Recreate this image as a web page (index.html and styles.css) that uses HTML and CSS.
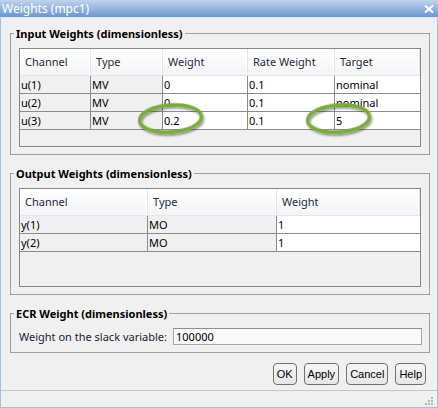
FILE: index.html
```html
<!DOCTYPE html>
<html>
<head>
<meta charset="utf-8">
<link rel="stylesheet" href="styles.css">
</head>
<body>
<div class="window">
  <div class="titlebar">
    <span class="title">Weights (mpc1)</span>
    <svg class="close" width="10" height="8" viewBox="0 0 10 8"><path d="M1 0.5 L9 7.5 M9 0.5 L1 7.5" stroke="#fff" stroke-width="2"/></svg>
  </div>
  <div class="client">
    <fieldset class="group">
      <legend>Input Weights (dimensionless)</legend>
      <div class="table t-input">
        <div class="row head">
          <div class="cell">Channel</div>
          <div class="cell">Type</div>
          <div class="cell">Weight</div>
          <div class="cell">Rate Weight</div>
          <div class="cell">Target</div>
        </div>
        <div class="row">
          <div class="cell ro">u(1)</div>
          <div class="cell ro">MV</div>
          <div class="cell">0</div>
          <div class="cell">0.1</div>
          <div class="cell">nominal</div>
        </div>
        <div class="row">
          <div class="cell ro">u(2)</div>
          <div class="cell ro">MV</div>
          <div class="cell">0</div>
          <div class="cell">0.1</div>
          <div class="cell">nominal</div>
        </div>
        <div class="row">
          <div class="cell ro">u(3)</div>
          <div class="cell ro">MV</div>
          <div class="cell">0.2</div>
          <div class="cell">0.1</div>
          <div class="cell">5</div>
        </div>
        <div class="filler"></div>
      </div>
    </fieldset>

    <fieldset class="group">
      <legend>Output Weights (dimensionless)</legend>
      <div class="table t-output">
        <div class="row head">
          <div class="cell">Channel</div>
          <div class="cell">Type</div>
          <div class="cell">Weight</div>
        </div>
        <div class="row">
          <div class="cell ro">y(1)</div>
          <div class="cell ro">MO</div>
          <div class="cell">1</div>
        </div>
        <div class="row">
          <div class="cell ro">y(2)</div>
          <div class="cell ro">MO</div>
          <div class="cell">1</div>
        </div>
        <div class="filler"></div>
      </div>
    </fieldset>

    <fieldset class="group ecr">
      <legend>ECR Weight (dimensionless)</legend>
      <div class="field">
        <span class="label">Weight on the slack variable:</span>
        <div class="input">100000</div>
      </div>
    </fieldset>

    <div class="buttons">
      <button class="btn">OK</button>
      <button class="btn">Apply</button>
      <button class="btn">Cancel</button>
      <button class="btn">Help</button>
    </div>

    <div class="statusbar">
      <svg class="grip" width="10" height="9" viewBox="0 0 10 9">
        <rect x="7" y="0" width="2" height="2" fill="#b8b8b8"/>
        <rect x="4" y="3" width="2" height="2" fill="#b8b8b8"/>
        <rect x="7" y="3" width="2" height="2" fill="#b8b8b8"/>
        <rect x="1" y="6" width="2" height="2" fill="#b8b8b8"/>
        <rect x="4" y="6" width="2" height="2" fill="#b8b8b8"/>
        <rect x="7" y="6" width="2" height="2" fill="#b8b8b8"/>
      </svg>
    </div>
  </div>

  <svg class="annot" width="438" height="408" viewBox="0 0 438 408">
    <defs>
      <filter id="sh" x="-20%" y="-30%" width="140%" height="170%">
        <feGaussianBlur in="SourceAlpha" stdDeviation="1.2"/>
        <feOffset dx="1" dy="2" result="b"/>
        <feComponentTransfer><feFuncA type="linear" slope="0.45"/></feComponentTransfer>
        <feMerge><feMergeNode/><feMergeNode in="SourceGraphic"/></feMerge>
      </filter>
    </defs>
    <ellipse cx="170.5" cy="118.5" rx="31" ry="13.5" fill="none" stroke="#7aaa3a" stroke-width="3.5" filter="url(#sh)" transform="rotate(-4 170.5 118.5)"/>
    <ellipse cx="338.5" cy="118.5" rx="31" ry="13.5" fill="none" stroke="#7aaa3a" stroke-width="3.5" filter="url(#sh)" transform="rotate(-4 338.5 118.5)"/>
  </svg>
</div>
</body>
</html>
```

FILE: styles.css
```css
html, body {
  margin: 0;
  padding: 0;
  background: #f0f0f0;
}

body {
  font-family: "Noto Sans", "Open Sans", sans-serif;
  font-size: 11px;
  color: #000;
}

.window {
  position: relative;
  width: 438px;
  height: 408px;
  display: flex;
  flex-direction: column;
  background: #f0f0f0;
  overflow: hidden;
}

.titlebar {
  height: 17px;
  border-bottom: 1px solid #e2e9f2;
  background: linear-gradient(#bfd3ec, #6a97cf);
  display: flex;
  align-items: center;
  justify-content: space-between;
  padding: 0 4px 0 2px;
}

.title {
  color: #fff;
  font-size: 12px;
  line-height: 17px;
}

.close {
  display: block;
}

.client {
  flex: 1;
  display: flex;
  flex-direction: column;
  border-left: 1px solid #a3bfe1;
  border-right: 1px solid #a3bfe1;
  border-bottom: 1px solid #a3bfe1;
  padding-top: 8px;
}

.group {
  margin: 0 7px 11px 9px;
  padding: 7px 8px;
  border: 1px solid #a0a0a0;
  min-width: 0;
}

.group.ecr {
  margin-bottom: 10px;
  padding-right: 7px;
}

legend {
  font-weight: bold;
  font-size: 11px;
  line-height: 15px;
  padding: 0 2px;
  margin-left: -5px;
  color: #000;
}

.table {
  height: 99px;
  box-sizing: border-box;
  border: 1px solid #828790;
  background: #f0f0f0;
  display: flex;
  flex-direction: column;
}

.row {
  display: grid;
  height: 18px;
  box-sizing: border-box;
  border-bottom: 1px solid #8c8c8c;
}

.t-input .row {
  grid-template-columns: 71px 72px 85px 87px 1fr;
}

.t-output .row {
  grid-template-columns: 128px 129px 1fr;
}

.cell {
  background: #fff;
  border-right: 1px solid #8c8c8c;
  padding-left: 1px;
  line-height: 17px;
  white-space: nowrap;
  overflow: hidden;
}

.cell:last-child {
  border-right: none;
}

.cell.ro {
  background: #f0f0f0;
}

.row.head {
  height: 27px;
  border-bottom: 1px solid #e3e5e8;
}

.row.head .cell {
  background: linear-gradient(#ffffff, #f3f4f6);
  border-right: 1px solid #e3e5e8;
  box-shadow: inset -1px 0 0 #fff;
  padding-left: 5px;
  line-height: 26px;
  color: #1e2b3c;
}

.filler {
  flex: 1;
}

.field {
  display: flex;
  align-items: center;
  justify-content: space-between;
  height: 17px;
}

.label {
  color: #1a1d33;
  padding-left: 0;
}

.input {
  width: 249px;
  height: 17px;
  box-sizing: border-box;
  border: 1px solid #a6a6a6;
  border-top-color: #8f8f8f;
  background: #f9f9f9;
  padding-left: 2px;
  line-height: 15px;
}

.buttons {
  display: flex;
  justify-content: flex-end;
  gap: 7px;
  padding-right: 11px;
  height: 22px;
}

.btn {
  font-family: "Liberation Sans", Arial, sans-serif;
  font-size: 11px;
  height: 22px;
  padding: 0 3px;
  margin: 0;
  border: 1px solid #707070;
  border-radius: 4px;
  background: linear-gradient(#f6f6f6, #e6e6e6);
  color: #000;
}

.statusbar {
  margin-top: 5px;
  flex: 1;
  border-top: 1px solid #b9c8da;
  display: flex;
  justify-content: flex-end;
  align-items: flex-end;
  padding: 0 3px 1px 0;
}

.grip {
  display: block;
}

.annot {
  position: absolute;
  left: 0;
  top: 0;
  pointer-events: none;
}
```
